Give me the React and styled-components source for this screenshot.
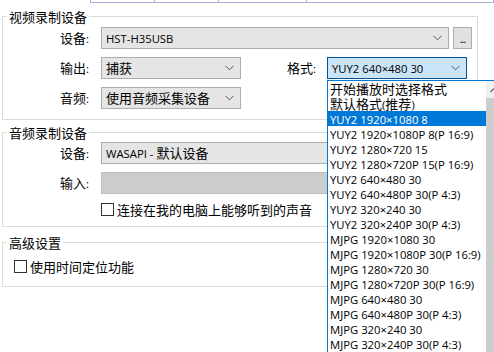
import styled, { createGlobalStyle } from "styled-components";

const GlobalStyle = createGlobalStyle`
  html, body {
    margin: 0;
    padding: 0;
    background: #ffffff;
    overflow: hidden;
  }
  body {
    font-family: "Noto Sans CJK SC", "Noto Sans", sans-serif;
    font-size: 13px;
    color: #000;
  }
`;

const formats = [
  "开始播放时选择格式",
  "默认格式(推荐)",
  "YUY2 1920×1080 8",
  "YUY2 1920×1080P 8(P 16:9)",
  "YUY2 1280×720 15",
  "YUY2 1280×720P 15(P 16:9)",
  "YUY2 640×480 30",
  "YUY2 640×480P 30(P 4:3)",
  "YUY2 320×240 30",
  "YUY2 320×240P 30(P 4:3)",
  "MJPG 1920×1080 30",
  "MJPG 1920×1080P 30(P 16:9)",
  "MJPG 1280×720 30",
  "MJPG 1280×720P 30(P 16:9)",
  "MJPG 640×480 30",
  "MJPG 640×480P 30(P 4:3)",
  "MJPG 320×240 30",
  "MJPG 320×240P 30(P 4:3)",
];

const tabs = [
  { width: 91, active: true },
  { width: 64 },
  { width: 64 },
  { width: 88 },
  { width: 187 },
];

// latin runs get the smaller ui font, cjk runs stay in the cjk face
const CJK = /([\u2E80-\u9FFF\uF900-\uFAFF\uFF00-\uFFEF]+)/;

function Txt({ children }) {
  return String(children)
    .split(CJK)
    .filter(Boolean)
    .map((part, i) => (CJK.test(part) ? part : <Latin key={i}>{part}</Latin>));
}

function Chevron() {
  return (
    <svg width="9" height="6" viewBox="0 0 9 6">
      <polyline points="0.5,0.8 4.5,4.8 8.5,0.8" fill="none" stroke="#555" strokeWidth="1" />
    </svg>
  );
}

function Combo({ width, value, variant, arrow = true }) {
  return (
    <ComboBox $width={width} $variant={variant}>
      <span>
        <Txt>{value}</Txt>
      </span>
      {arrow && <Chevron />}
    </ComboBox>
  );
}

function Check({ children }) {
  return (
    <CheckRow>
      <Box />
      <span>{children}</span>
    </CheckRow>
  );
}

export default function App() {
  return (
    <>
      <GlobalStyle />
      <Page>
        <TabStrip>
          {tabs.map((t, i) => (
            <Tab key={i} $width={t.width} $active={t.active} />
          ))}
        </TabStrip>

        <Group $mt={5} $pt={2} $pb={10}>
          <Legend>视频录制设备</Legend>
          <Rows>
            <Row>
              <Label><Txt>设备:</Txt></Label>
              <Combo width={348} value="HST-H35USB" />
              <DotsButton>...</DotsButton>
            </Row>
            <Row>
              <Label><Txt>输出:</Txt></Label>
              <Combo width={140} value="捕获" />
              <Label $width={75} $gap={11}><Txt>格式:</Txt></Label>
              <Combo width={140} value="YUY2 640×480 30" variant="focus" />
            </Row>
            <Row>
              <Label><Txt>音频:</Txt></Label>
              <Combo width={140} value="使用音频采集设备" />
            </Row>
          </Rows>
        </Group>

        <Group $mt={4} $pt={1} $pb={9}>
          <Legend>音频录制设备</Legend>
          <Rows>
            <Row>
              <Label><Txt>设备:</Txt></Label>
              <Combo width={348} value="WASAPI - 默认设备" />
            </Row>
            <Row>
              <Label><Txt>输入:</Txt></Label>
              <Combo width={348} value="" variant="disabled" arrow={false} />
            </Row>
            <CheckLine $indent={98}>
              <Check>连接在我的电脑上能够听到的声音</Check>
            </CheckLine>
          </Rows>
        </Group>

        <Group $mt={7} $pt={8} $pb={12}>
          <Legend>高级设置</Legend>
          <CheckLine $indent={11}>
            <Check>使用时间定位功能</Check>
          </CheckLine>
        </Group>

        <DropList>
          <Items>
            {formats.map((f, i) => (
              <Item key={f} $selected={i === 2}>
                <Txt>{f}</Txt>
              </Item>
            ))}
          </Items>
          <ScrollBar>
            <ScrollArrow>
              <svg width="9" height="6" viewBox="0 0 9 6">
                <polyline points="0.5,5 4.5,1 8.5,5" fill="none" stroke="#606060" strokeWidth="1.2" />
              </svg>
            </ScrollArrow>
            <Thumb />
          </ScrollBar>
        </DropList>
      </Page>
    </>
  );
}

const Latin = styled.span`
  font-family: "Open Sans", "Noto Sans", sans-serif;
  font-size: 11.3px;
`;

const Page = styled.div`
  position: relative;
  width: 494px;
  height: 352px;
  overflow: hidden;
`;

const TabStrip = styled.div`
  display: flex;
  height: 3px;
`;

const Tab = styled.div`
  width: ${(p) => p.$width}px;
  box-sizing: border-box;
  border-right: 1px solid #aab2d8;
  border-bottom: ${(p) => (p.$active ? "none" : "1px solid #aab2d8")};
`;

const Group = styled.fieldset`
  display: block;
  box-sizing: border-box;
  width: 476px;
  min-width: 0;
  margin: ${(p) => p.$mt}px 0 0 2px;
  padding: ${(p) => p.$pt}px 0 ${(p) => p.$pb}px 0;
  border: 1px solid #dcdcdc;
`;

const Legend = styled.legend`
  margin-left: 4px;
  padding: 0 2px;
  line-height: 17px;
  font-size: 13px;
`;

const Rows = styled.div`
  display: flex;
  flex-direction: column;
  gap: 8px;
`;

const Row = styled.div`
  display: flex;
  align-items: center;
  height: 22px;
`;

const Label = styled.div`
  box-sizing: border-box;
  width: ${(p) => p.$width || 86}px;
  margin-right: ${(p) => p.$gap || 12}px;
  text-align: right;
  line-height: 22px;
  white-space: nowrap;
`;

const ComboBox = styled.div`
  box-sizing: border-box;
  display: flex;
  align-items: center;
  justify-content: space-between;
  width: ${(p) => p.$width}px;
  height: 22px;
  padding: 0 6px 0 4px;
  white-space: nowrap;
  background: ${(p) =>
    p.$variant === "focus" ? "#cce4f7" : p.$variant === "disabled" ? "#cccccc" : "#e5e5e5"};
  border: 1px solid
    ${(p) => (p.$variant === "focus" ? "#005499" : p.$variant === "disabled" ? "#bfbfbf" : "#adadad")};
  line-height: 20px;
`;

const DotsButton = styled.div`
  box-sizing: border-box;
  width: 19px;
  height: 22px;
  margin-left: 4px;
  background: #e1e1e1;
  border: 1px solid #adadad;
  text-align: center;
  line-height: 22px;
  font-family: "Open Sans", sans-serif;
  font-size: 11px;
  letter-spacing: -1px;
`;

const CheckLine = styled.div`
  display: flex;
  padding-left: ${(p) => p.$indent}px;
  height: 15px;
  align-items: center;
`;

const CheckRow = styled.label`
  display: flex;
  align-items: center;
  gap: 3px;
  line-height: 15px;
  white-space: nowrap;
`;

const Box = styled.span`
  box-sizing: border-box;
  width: 13px;
  height: 13px;
  border: 1px solid #333;
  background: #fff;
`;

const DropList = styled.div`
  position: absolute;
  left: 327px;
  top: 80px;
  width: 177px;
  bottom: -20px;
  display: flex;
  box-sizing: border-box;
  border: 1px solid #0078d7;
  background: #fff;
`;

const Items = styled.div`
  width: 158px;
  display: flex;
  flex-direction: column;
`;

const Item = styled.div`
  height: 15px;
  line-height: 15px;
  padding-left: 2px;
  white-space: nowrap;
  background: ${(p) => (p.$selected ? "#0078d7" : "transparent")};
  color: ${(p) => (p.$selected ? "#fff" : "#000")};
`;

const ScrollBar = styled.div`
  width: 17px;
  display: flex;
  flex-direction: column;
  background: #f0f0f0;
`;

const ScrollArrow = styled.div`
  height: 17px;
  display: flex;
  align-items: center;
  justify-content: center;
`;

const Thumb = styled.div`
  flex: 1;
  background: #cdcdcd;
`;
